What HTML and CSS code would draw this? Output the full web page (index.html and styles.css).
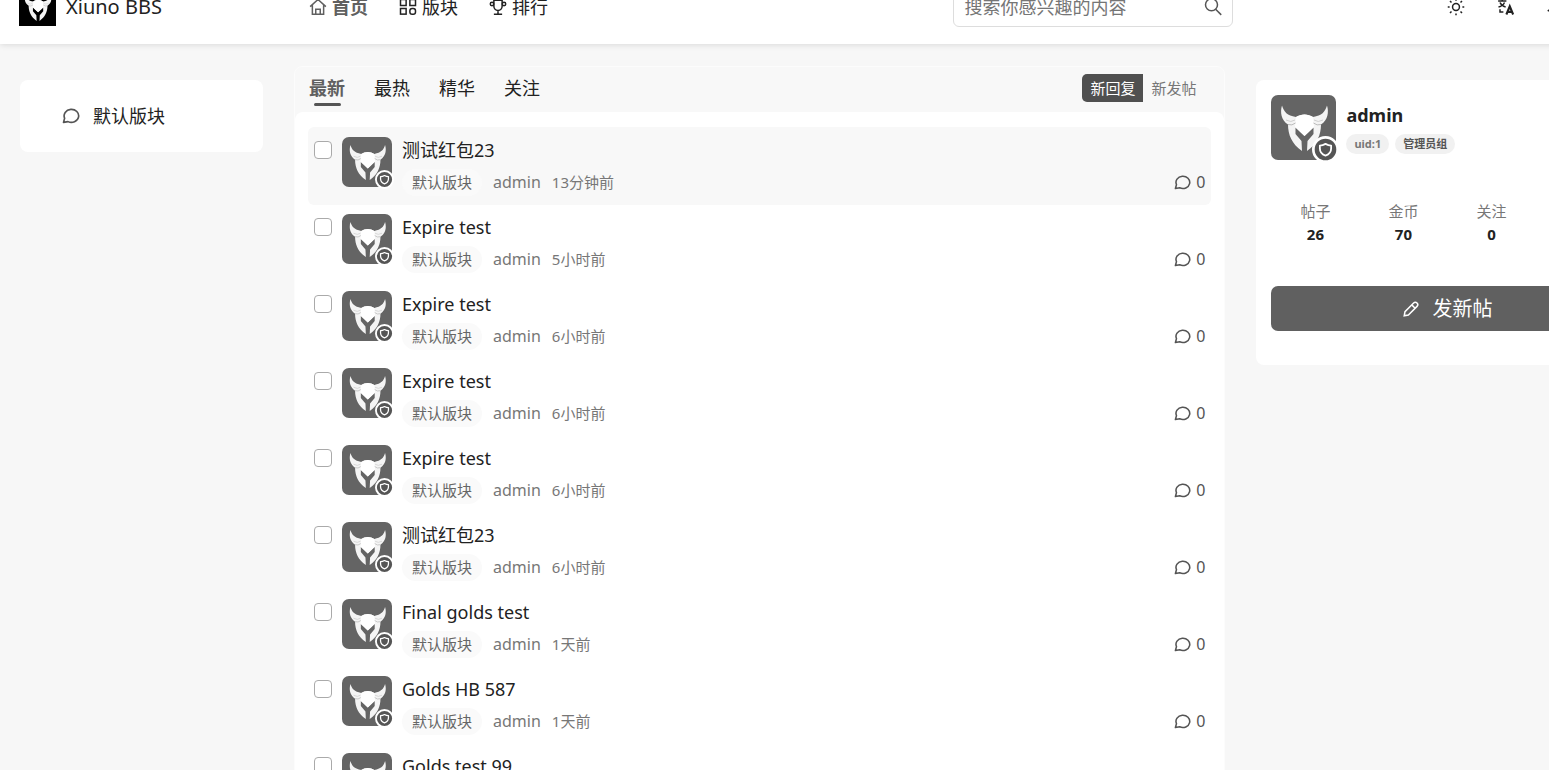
FILE: index.html
```html
<!DOCTYPE html>
<html lang="zh-CN">
<head>
  <meta charset="utf-8">
  <meta name="viewport" content="width=device-width, initial-scale=1.0">
  <title>Xiuno BBS</title>
  <link rel="stylesheet" href="styles.css">
  <script>
    // 帖子列表数据
    var threads = [
      { title: "测试红包23", time: "13分钟前" },
      { title: "Expire test", time: "5小时前" },
      { title: "Expire test", time: "6小时前" },
      { title: "Expire test", time: "6小时前" },
      { title: "Expire test", time: "6小时前" },
      { title: "测试红包23", time: "6小时前" },
      { title: "Final golds test", time: "1天前" },
      { title: "Golds HB 587", time: "1天前" },
      { title: "Golds test 99", time: "1天前" }
    ];

    function renderThreads() {
      var list = document.getElementById("threads");
      threads.forEach(function(thread, i) {
        var item = document.createElement("li");
        item.className = i === 0 ? "thread active" : "thread";
        item.innerHTML =
          '<input class="thread-check" type="checkbox" aria-labelledby="title-' + i + '">' +
          '<a class="avatar" href="#" aria-labelledby="user-' + i + '">' +
            '<svg class="avatar-img" viewBox="0 0 65 65"><use href="#helmet"/></svg>' +
            '<svg class="avatar-badge" viewBox="0 0 24 24"><use href="#shield"/></svg>' +
          '</a>' +
          '<div class="thread-body">' +
            '<a class="thread-title" href="#" id="title-' + i + '">' + thread.title + '</a>' +
            '<div class="thread-meta">' +
              '<a class="forum-tag" href="#">默认版块</a>' +
              '<a class="username" href="#" id="user-' + i + '">admin</a>' +
              '<span class="date">' + thread.time + '</span>' +
              '<span class="replies"><svg class="icon-reply" viewBox="0 0 24 24"><use href="#comment"/></svg>0</span>' +
            '</div>' +
          '</div>';
        list.appendChild(item);
      });
    }

    document.addEventListener("DOMContentLoaded", renderThreads);
  </script>
</head>
<body>
  <svg class="sprite">
    <symbol id="helmet" viewBox="0 0 65 65">
      <path fill="#f4f4f4" d="M11 10.500C9 17 10 25 17 29.500C17 40 21 49 31 56L30.500 46L24.500 39L24.500 32.500L33.500 41L42.500 32.500L42.500 39L36.500 46L36 56C46 49 50 40 50 29.500C57 25 58 17 56 10.500C54 17 51 20.500 42 22C37 18.500 30 18.500 25 22C16 20.500 13 17 11 10.500Z"/>
      <path fill="#fff" d="M25 22C30 18.500 37 18.500 42 22L43 32L33.500 41L24 32Z"/>
      <path fill="none" stroke="#bbb" stroke-width="1" d="M17 29.500Q21 31 24.500 28M50 29.500Q46 31 42.500 28"/>
      <path fill="none" stroke="#d0d0d0" stroke-width="1" d="M15 25Q20 28 24 25M52 25Q47 28 43 25"/>
    </symbol>
    <symbol id="shield" viewBox="0 0 24 24">
      <circle cx="12" cy="12" r="10.8" fill="#555" stroke="#fff" stroke-width="2.4"/>
      <path fill="none" stroke="#fff" stroke-width="1.6" stroke-linejoin="round" d="M12 7Q14.500 8.500 17 8.500V11Q17 15.500 12 17.500Q7 15.500 7 11V8.500Q9.500 8.500 12 7Z"/>
    </symbol>
    <symbol id="comment" viewBox="0 0 24 24">
      <path fill="none" stroke="currentColor" stroke-width="2.200" stroke-linejoin="round" d="M2 20.500L3.500 15A9.700 8.700 0 1 1 8 19.500Z"/>
    </symbol>
  </svg>

  <header class="header">
    <a class="brand" href="#">
      <svg class="logo" viewBox="0 0 65 65"><use href="#helmet"/></svg>
      <span>Xiuno BBS</span>
    </a>
    <nav class="nav">
      <a class="nav-link active" href="#">
        <svg viewBox="0 0 24 24"><path d="M1.500 11.500L12 2L22.500 11.500M4.500 9.500V21.500H19.500V9.500M9 21V15H15V21"/></svg>
        首页
      </a>
      <a class="nav-link" href="#">
        <svg viewBox="0 0 24 24"><rect x="2" y="2" width="7.500" height="8"/><rect x="14.500" y="2" width="7.500" height="8"/><rect x="2" y="14" width="7.500" height="7.500"/><rect x="14.500" y="14" width="7.500" height="7.500" rx="3"/></svg>
        版块
      </a>
      <a class="nav-link" href="#">
        <svg viewBox="0 0 24 24"><path d="M6.500 3H17.500V11A5.500 5.500 0 0 1 6.500 11ZM12 16V21M6.500 21.500H17.500"/><circle cx="4" cy="8" r="2.300"/><circle cx="20" cy="8" r="2.300"/></svg>
        排行
      </a>
    </nav>
    <form class="search">
      <input type="search" placeholder="搜索你感兴趣的内容" aria-label="搜索">
      <button type="submit" aria-label="搜索">
        <svg viewBox="0 0 24 24"><circle cx="10" cy="9" r="8"/><path d="M15.500 15L23 22.500"/></svg>
      </button>
    </form>
    <div class="tools">
      <button type="button" aria-label="主题">
        <svg viewBox="0 0 24 24"><circle cx="12" cy="12" r="4.600"/><path d="M12 1V3.500M12 20.500V23M1 12H3.500M20.500 12H23M4 4L6 6M18 18L20 20M4 20L6 18M18 6L20 4"/></svg>
      </button>
      <button type="button" aria-label="语言">
        <svg viewBox="0 0 24 24"><path d="M1.500 4H12.500M7 1.500V4M4 6Q6 10.500 11.500 12M10 6Q8 10.500 2 12"/><path stroke-width="2.800" d="M12.500 22L17 11L21.500 22M14 18.500H20"/><path d="M4 15V18.500H8.500"/></svg>
      </button>
      <button type="button" aria-label="通知">
        <svg viewBox="0 0 24 24"><path d="M1 17.500L5 14.500V9A7 7 0 0 1 19 9V14.500L23 17.500M9 21H15"/></svg>
      </button>
    </div>
  </header>

  <div class="container">
    <aside class="card forums">
      <a class="forum-link" href="#">
        <svg viewBox="0 0 24 24"><use href="#comment"/></svg>
        默认版块
      </a>
    </aside>

    <main class="main">
      <div class="main-head">
        <nav class="tabs">
          <a class="tab active" href="#">最新</a>
          <a class="tab" href="#">最热</a>
          <a class="tab" href="#">精华</a>
          <a class="tab" href="#">关注</a>
        </nav>
        <div class="sort">
          <button class="sort-btn active" type="button">新回复</button>
          <button class="sort-btn" type="button">新发帖</button>
        </div>
      </div>
      <ul class="threads" id="threads"></ul>
    </main>

    <aside class="card profile">
      <div class="profile-head">
        <a class="avatar avatar-lg" href="#" aria-labelledby="profile-name">
          <svg class="avatar-img" viewBox="0 0 65 65"><use href="#helmet"/></svg>
          <svg class="avatar-badge" viewBox="0 0 24 24"><use href="#shield"/></svg>
        </a>
        <div>
          <div class="profile-name" id="profile-name">admin</div>
          <div class="pills">
            <span class="pill">uid:1</span>
            <span class="pill pill-dark">管理员组</span>
          </div>
        </div>
      </div>
      <dl class="stats">
        <div><dt>帖子</dt><dd>26</dd></div>
        <div><dt>金币</dt><dd>70</dd></div>
        <div><dt>关注</dt><dd>0</dd></div>
      </dl>
      <button class="post-btn" type="button">
        <svg viewBox="0 0 24 24"><path d="M3 21L4 15.500L15.500 4A2.800 2.800 0 0 1 20 8.500L8.500 20ZM13 6.500L17.500 11"/></svg>
        发新帖
      </button>
    </aside>
  </div>
</body>
</html>
```

FILE: styles.css
```css
* {
  box-sizing: border-box;
}

html {
  overflow: hidden;
  background: #f7f7f7;
}

body {
  width: 107%;
  margin: 0;
  font-family: "Noto Sans", "Noto Sans CJK SC", sans-serif;
  font-size: 15px;
  line-height: 24px;
  color: #222;
}

a {
  color: inherit;
  text-decoration: none;
}

button {
  padding: 0;
  border: 0;
  background: none;
  font: inherit;
  color: inherit;
}

.sprite {
  display: none;
}

/* 顶部导航 */
.header {
  display: flex;
  align-items: center;
  height: 74px;
  margin-top: -30px;
  padding: 0 19px;
  background: #fff;
  box-shadow: 0 1px 6px rgba(0, 0, 0, 0.12);
}

.brand {
  display: flex;
  align-items: center;
  gap: 10px;
  width: 290px;
  font-size: 20px;
}

.logo {
  width: 37px;
  height: 37px;
  background: #000;
}

.nav {
  display: flex;
  gap: 31px;
  font-size: 18px;
}

.nav-link {
  display: flex;
  align-items: center;
  gap: 5px;
}

.nav-link.active {
  font-weight: bold;
  color: #606060;
}

.nav-link svg,
.tools svg,
.search svg {
  display: block;
  width: 18px;
  height: 18px;
  fill: none;
  stroke: currentColor;
  stroke-width: 2;
}

.search {
  display: flex;
  align-items: center;
  width: 280px;
  height: 40px;
  margin-left: auto;
  padding: 0 10px;
  border: 1px solid #ddd;
  border-radius: 6px;
}

.search input {
  flex: 1;
  min-width: 0;
  padding: 0;
  border: 0;
  outline: 0;
  background: none;
  font: inherit;
  font-size: 18px;
}

.search input::placeholder {
  color: #757575;
}

.search button {
  color: #555;
}

.tools {
  display: flex;
  gap: 32px;
  width: 405px;
  padding-left: 214px;
}

/* 三栏布局 */
.container {
  display: grid;
  grid-template-columns: 243px 1fr 381px;
  gap: 31px;
  align-items: start;
  padding: 22px 20px 0;
}

.card {
  margin-top: 14px;
  border-radius: 8px;
  background: #fff;
}

.forums {
  padding: 24px 42px;
}

.forum-link {
  display: flex;
  align-items: center;
  gap: 13px;
  font-size: 18px;
}

.forum-link svg {
  width: 18px;
  height: 18px;
  color: #555;
}

.main {
  border: 1px solid #fcfcfc;
  border-radius: 8px;
  background: #f8f8f8;
}

.main-head {
  display: flex;
  justify-content: space-between;
  padding: 7px 20px 6px 14px;
}

.tabs {
  display: flex;
  gap: 29px;
  font-size: 18px;
  line-height: 29px;
}

.tab.active {
  font-weight: bold;
  color: #606060;
}

.tab.active::after {
  content: "";
  display: block;
  width: 27px;
  height: 3px;
  margin: 0 auto;
  border-radius: 2px;
  background: #555;
}

.sort {
  display: flex;
}

.sort-btn {
  height: 28px;
  padding: 0 8px;
  color: #777;
}

.sort-btn.active {
  border-radius: 5px 0 0 5px;
  background: #505050;
  color: #fff;
}

/* 帖子列表 */
.threads {
  margin: 0;
  padding: 15px 13px 0;
  list-style: none;
  border-radius: 8px 8px 0 0;
  background: #fff;
}

.thread {
  display: flex;
  align-items: flex-start;
  padding: 9px 6px;
  border-radius: 6px;
}

.thread.active {
  padding-top: 10px;
  background: #f8f8f8;
}

.thread-check {
  appearance: none;
  width: 18px;
  height: 18px;
  margin: 4px 10px 0 0;
  border: 1px solid #aaa;
  border-radius: 4px;
  background: #fff;
}

.avatar {
  position: relative;
  width: 50px;
  height: 50px;
  margin-right: 10px;
}

.avatar-img {
  display: block;
  width: 100%;
  height: 100%;
  border-radius: 7px;
  background: #646464;
}

.avatar-badge {
  position: absolute;
  right: -2px;
  bottom: -2px;
  width: 19px;
  height: 19px;
}

.thread-body {
  flex: 1;
}

.thread-title {
  display: block;
  font-size: 18px;
  line-height: 26px;
}

.thread-meta {
  display: flex;
  align-items: center;
  margin-top: 6px;
  line-height: 27px;
  color: #777;
}

.forum-tag {
  padding: 0 10px;
  border-radius: 14px;
  background: #fafafa;
  color: #666;
}

.username {
  margin: 0 11px;
  font-size: 16px;
}

.replies {
  display: flex;
  align-items: center;
  gap: 5px;
  margin-left: auto;
  font-size: 16px;
  color: #555;
}

.icon-reply {
  width: 17px;
  height: 17px;
}

/* 用户卡片 */
.profile {
  padding: 15px 14px 34px 15px;
}

.profile-head {
  display: flex;
}

.avatar-lg {
  width: 65px;
  height: 65px;
}

.avatar-lg .avatar-badge {
  width: 27px;
  height: 27px;
  right: -3px;
  bottom: -3px;
}

.profile-name {
  padding-top: 8px;
  font-size: 18px;
  font-weight: bold;
}

.pills {
  display: flex;
  gap: 6px;
  margin-top: 7px;
}

.pill {
  padding: 0 8px;
  border-radius: 10px;
  background: #f1f1f1;
  font-size: 11px;
  font-weight: bold;
  line-height: 20px;
  color: #777;
}

.pill-dark {
  color: #555;
}

.stats {
  display: grid;
  grid-template-columns: repeat(4, 1fr);
  margin: 39px 0 41px;
  text-align: center;
}

.stats dt {
  color: #777;
}

.stats dd {
  margin: 0;
  font-weight: bold;
  line-height: 22px;
}

.post-btn {
  display: flex;
  align-items: center;
  justify-content: center;
  gap: 12px;
  width: 100%;
  height: 45px;
  border-radius: 7px;
  background: #606060;
  color: #fff;
  font-size: 20px;
}

.post-btn svg {
  width: 18px;
  height: 18px;
  fill: none;
  stroke: currentColor;
  stroke-width: 2;
}
```
